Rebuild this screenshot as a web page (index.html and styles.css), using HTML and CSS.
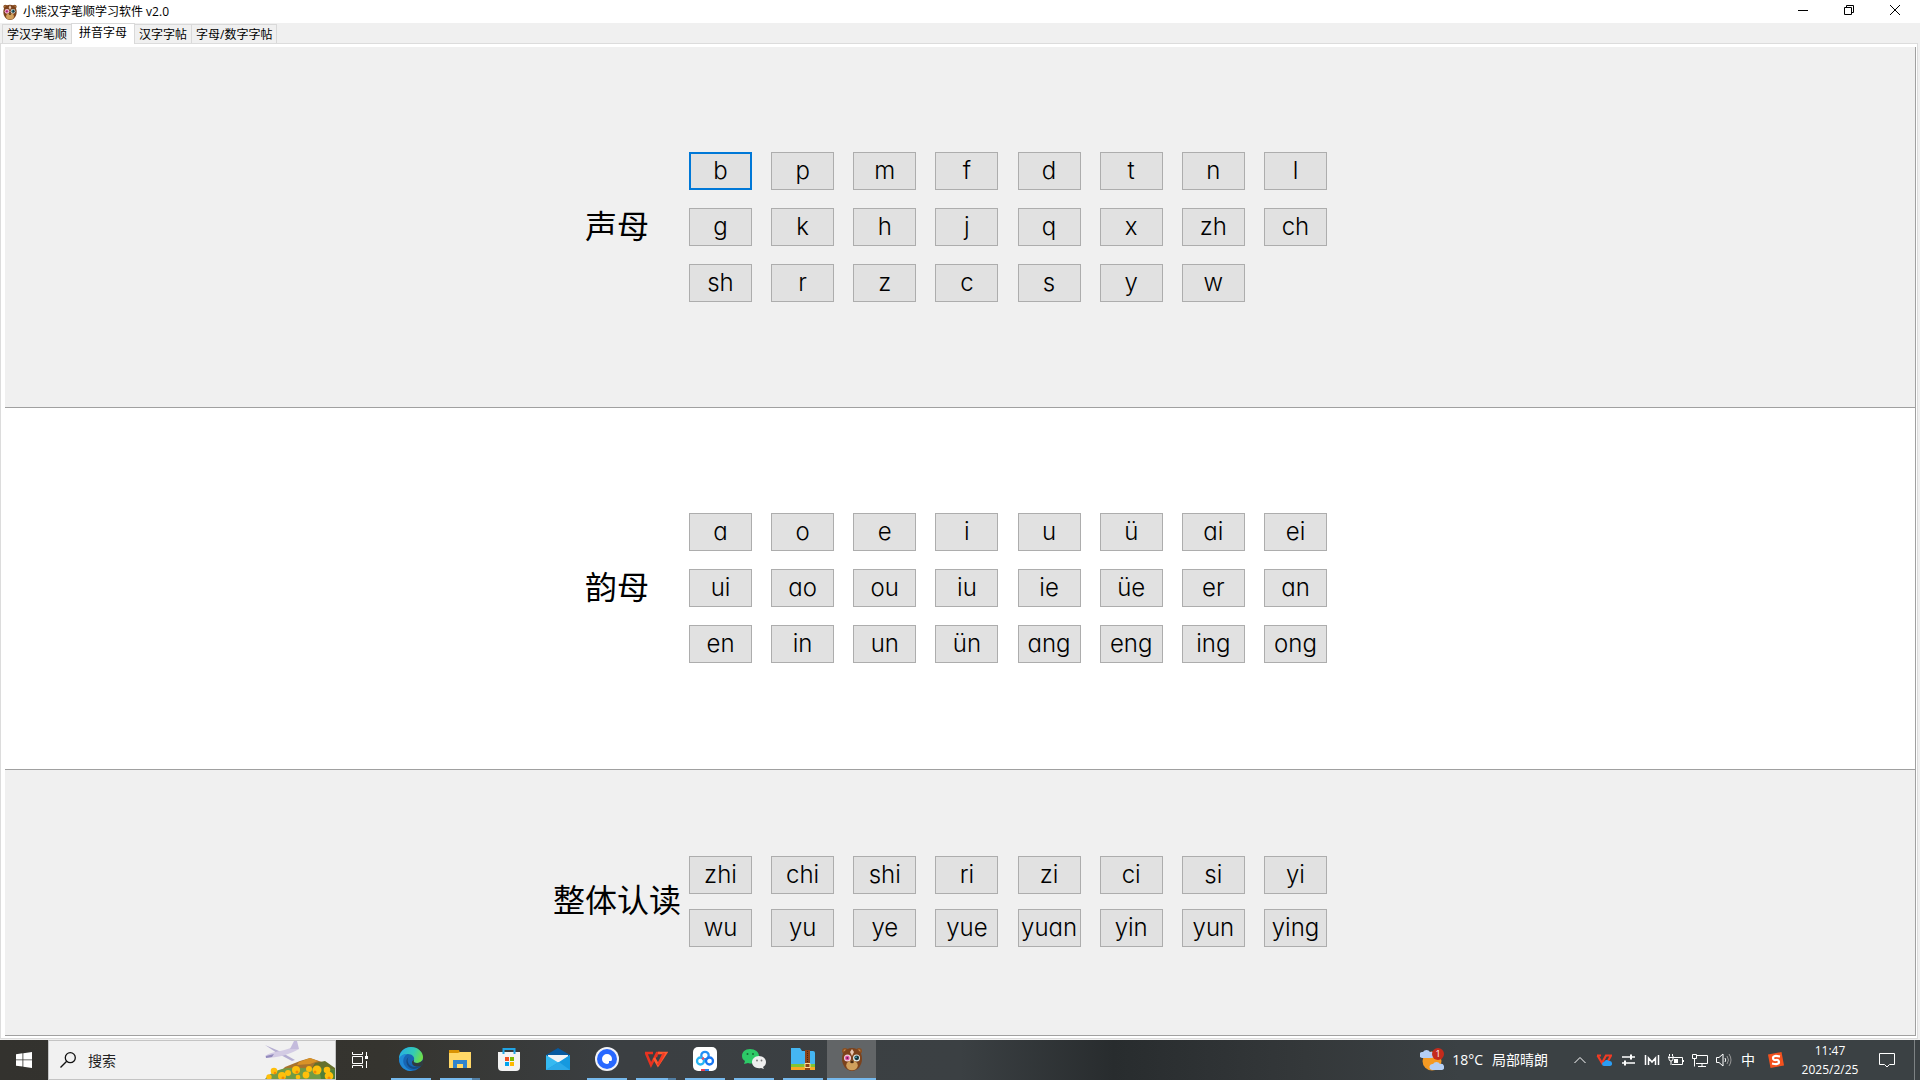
FILE: index.html
```html
<!DOCTYPE html>
<html lang="zh-CN">
<head>
<meta charset="utf-8">
<title>小熊汉字笔顺学习软件 v2.0</title>
<link rel="stylesheet" href="styles.css">
</head>
<body>
<svg class="defs" width="0" height="0" aria-hidden="true">
  <symbol id="bear" viewBox="0 0 24 24">
    <circle cx="5" cy="4" r="3" fill="#8a4f22"/><circle cx="19" cy="4" r="3" fill="#8a4f22"/>
    <circle cx="5" cy="4" r="1.400" fill="#c98c50"/><circle cx="19" cy="4" r="1.400" fill="#c98c50"/>
    <path d="M12 1C5 1 2 6 2 12c0 7 5 12 10 12s10-5 10-12C22 6 19 1 12 1z" fill="#7c421c"/>
    <path d="M12 2 10 5l2 4 2-4z" fill="#e6c8b4"/>
    <circle cx="7.500" cy="11" r="3.500" fill="#f0cfdd"/><circle cx="16.500" cy="11" r="3.500" fill="#dfe9e6"/>
    <circle cx="7.300" cy="11" r="2.300" fill="#e04aa0"/><circle cx="16.700" cy="10.800" r="2.400" fill="#16353d"/>
    <circle cx="7.300" cy="11" r="1" fill="#682050"/><circle cx="16" cy="10.300" r=".8" fill="#58cae0"/>
    <ellipse cx="12" cy="18.500" rx="5.800" ry="4.800" fill="#d1a05c"/>
    <ellipse cx="12" cy="15" rx="1.800" ry="1.300" fill="#4b2a12"/>
  </symbol>
</svg>

<div class="window">
  <header class="titlebar">
    <svg class="app-icon" aria-hidden="true"><use href="#bear"/></svg>
    <span class="title">小熊汉字笔顺学习软件 v2.0</span>
    <div class="window-controls">
      <button aria-label="最小化"><svg width="10" height="10"><path d="M0 5.500h10"/></svg></button>
      <button aria-label="还原"><svg width="10" height="10"><path d="M.5 2.500h7v7h-7zM2.500 2.500v-2h7v7h-2"/></svg></button>
      <button aria-label="关闭"><svg width="10" height="10"><path d="M0 0l10 10M10 0 0 10"/></svg></button>
    </div>
  </header>

  <nav class="tabs" role="tablist">
    <button role="tab">学汉字笔顺</button>
    <button role="tab" class="selected" aria-selected="true">拼音字母</button>
    <button role="tab">汉字字帖</button>
    <button role="tab">字母/数字字帖</button>
  </nav>

  <main class="pane">
    <section class="group">
      <div class="group-body">
        <h2>声母</h2>
        <div class="keys">
          <button class="focused">b</button><button>p</button><button>m</button><button>f</button><button>d</button><button>t</button><button>n</button><button>l</button>
          <button>g</button><button>k</button><button>h</button><button>j</button><button>q</button><button>x</button><button>zh</button><button>ch</button>
          <button>sh</button><button>r</button><button>z</button><button>c</button><button>s</button><button>y</button><button>w</button>
        </div>
      </div>
    </section>
    <section class="group white">
      <div class="group-body">
        <h2>韵母</h2>
        <div class="keys">
          <button>a</button><button>o</button><button>e</button><button>i</button><button>u</button><button>ü</button><button>ai</button><button>ei</button>
          <button>ui</button><button>ao</button><button>ou</button><button>iu</button><button>ie</button><button>üe</button><button>er</button><button>an</button>
          <button>en</button><button>in</button><button>un</button><button>ün</button><button>ang</button><button>eng</button><button>ing</button><button>ong</button>
        </div>
      </div>
    </section>
    <section class="group short">
      <div class="group-body">
        <h2>整体认读</h2>
        <div class="keys">
          <button>zhi</button><button>chi</button><button>shi</button><button>ri</button><button>zi</button><button>ci</button><button>si</button><button>yi</button>
          <button>wu</button><button>yu</button><button>ye</button><button>yue</button><button>yuan</button><button>yin</button><button>yun</button><button>ying</button>
        </div>
      </div>
    </section>
  </main>
</div>

<footer class="taskbar">
  <button class="start" aria-label="开始"><svg width="16" height="16" viewBox="0 0 16 16" fill="#fff"><path d="M0 2.200 6.500 1.300v6.200H0zM7.300 1.200 16 0v7.500H7.300zM0 8.300h6.500v6.200L0 13.700zM7.300 8.300H16V16l-8.700-1.200z"/></svg></button>
  <div class="search">
    <svg width="16" height="16" viewBox="0 0 16 16" fill="none" stroke="#111" stroke-width="1.300"><circle cx="10.300" cy="5.700" r="5"/><path d="M6.700 9.300.5 15.500"/></svg>
    <input type="text" placeholder="搜索" aria-label="搜索">
    <svg class="scene" width="70" height="38" viewBox="0 0 70 38" aria-hidden="true">
      <path d="M20 26 35 20l10-3 12 4 13 8v9H8z" fill="#a8732c"/>
      <path d="M34 21 45 17l8 3-8 3-13 1z" fill="#d99227"/><path d="M50 22l10-2 10 7v11H40z" fill="#66702c"/>
      <path d="M0 38c8-10 22-12 36-11s26-1 34 2v9z" fill="#719b45"/><path d="M54 26l16 3v9H56z" fill="#517f37"/>
      <g fill="#b5aed2"><path d="M0 4l14 6 16 9-3 1-15-8z"/><path d="M0 15c6-5 18-4 28-9l6 2c-8 5-22 9-33 9z" fill="#d3cbe4"/><path d="M25 8l4-8 3 0 2 8z" fill="#c4bbdc"/><path d="M1 15l8-2-2 3-6 1z" fill="#938bbd"/></g>
      <g fill="#ffbf0b"><circle cx="9" cy="30" r="3.300"/><circle cx="17" cy="35" r="4"/><circle cx="23" cy="32" r="3"/><circle cx="31" cy="29" r="4"/><circle cx="41" cy="34" r="3.400"/><circle cx="44" cy="28" r="3"/><circle cx="52" cy="29" r="4.500"/><circle cx="62" cy="29" r="3.300"/><circle cx="64" cy="35" r="4.300"/><circle cx="4" cy="36" r="2.700"/><circle cx="33" cy="36" r="2.300"/></g>
      <g fill="#f28b05"><circle cx="10" cy="32" r="1.300"/><circle cx="18" cy="37" r="1.500"/><circle cx="32" cy="31" r="1.500"/><circle cx="50" cy="31" r="1.500"/><circle cx="64" cy="37" r="1.500"/></g>
    </svg>
  </div>
  <button class="taskview" aria-label="任务视图"><svg width="16" height="16" viewBox="0 0 16 16" fill="none" stroke="#fff"><path d="M.5 0v2.500h10V0M.5 16v-2.500h10V16M.5 4.500h10v7H.5zM14.500 0v4M14.500 9v7"/><path d="M13 4h3v3h-3z" fill="#fff" stroke="none"/></svg></button>

  <div class="apps">
    <button class="running" aria-label="Edge"><svg viewBox="0 0 24 24">
      <defs><linearGradient id="ea" x1="0" x2="1" y1=".2" y2=".5"><stop stop-color="#26aee8"/><stop offset=".6" stop-color="#34cbb4"/><stop offset="1" stop-color="#6fdf48"/></linearGradient></defs>
      <circle cx="12" cy="12" r="12" fill="#1765b4"/>
      <path d="M0 12C0 5 5 0 12 0s12 5 12 10c0 4-3 6-6 6s-4-1-3-3c1-3-2-6-6-6-5 0-8 3-9 5z" fill="url(#ea)"/>
      <path d="M0 12c1-3 4-5 8-5-4 3-5 8-2 12 2 3 5 4 8 5C6 25 0 19 0 12z" fill="#2089d5"/>
      <path d="M9.500 10C7 14 10 20 16 20c3 0 5-1 7-2-1 1-4 4-8 4C8 22 5 13 9.500 10z" fill="#154a82"/>
      <path d="M15 13c-1 2 0 3 3 3 2 0 4-1 6-3v5c-3 2-11 3-11-3 0-1 1-2 2-2z" fill="#303b40"/></svg></button>
    <button class="running multi" aria-label="文件资源管理器"><svg viewBox="0 0 24 24"><path d="M1 3h10l1 3H1z" fill="#d99304"/><path d="M1 6h9l2-1h11v16H1z" fill="#ffd767"/><path d="M5 21v-8h14v8h-4v-4H9v4z" fill="#2f83cc"/></svg></button>
    <button aria-label="Microsoft Store"><svg viewBox="0 0 24 24"><path d="M1 5h22v15q0 4-4 4H5q-4 0-4-4z" fill="#f3f3f3"/><path d="M6.500 7V2h11v5" fill="none" stroke="#21a5e6" stroke-width="2"/><path fill="#f25022" d="M8 10h4v4H8z"/><path fill="#7fba00" d="M13 10h4v4h-4z"/><path fill="#00a4ef" d="M8 15h4v4H8z"/><path fill="#ffb900" d="M13 15h4v4h-4z"/></svg></button>
    <button aria-label="邮件"><svg viewBox="0 0 24 24"><path d="M0 8 12 1l12 7v8H0z" fill="#07599f"/><path d="M2 8h20v8H2z" fill="#f1f3f5"/><path d="M0 8l13 8 11-8v15H0z" fill="#35b9f1"/><path d="M0 23 13 15l11-7v15z" fill="#1599df"/><path d="M0 23l13-8 11 8z" fill="#2ba9e8"/></svg></button>
    <button class="running" aria-label="浏览器"><svg viewBox="0 0 24 24"><circle cx="12" cy="12" r="12" fill="#f2f3f7"/><circle cx="12" cy="12" r="10" fill="#2868ff"/><path d="M12 7a5 5 0 0 1 5 5q0 2-1 2h-2v2q-1 1-2 1a5 5 0 0 1 0-10z" fill="#fff"/></svg></button>
    <button class="running multi" aria-label="WPS"><svg viewBox="0 0 24 24" fill="none" stroke-width="2.600"><path d="M1 6h8M2 6l5 12 6-12h3M13 6l-1 4" stroke="#e83220"/><path d="M10 11l4 7 8-12h-8" stroke="#ff5a30"/><path d="M14 18l6-12" stroke="#f13a24"/></svg></button>
    <button class="running" aria-label="百度网盘"><svg viewBox="0 0 24 24"><rect width="24" height="24" rx="5" fill="#fff"/><g fill="none" stroke-width="2.300"><circle cx="12" cy="8.500" r="3.700" stroke="#2390f5"/><circle cx="7.500" cy="14" r="3.500" stroke="#27b5f5"/><circle cx="16.500" cy="14" r="3.500" stroke="#1976f1"/><path d="M9 12l2-1" stroke="#f14862"/></g><path d="M8 22h4v2H8z" fill="#e84053"/><path d="M12 22h4v2h-4z" fill="#2782ef"/></svg></button>
    <button class="running" aria-label="微信"><svg viewBox="0 0 24 24"><path d="M8 2c-5 0-8 3-8 7 0 2 1 4 3 5l-1 3 4-1c7 2 11-2 11-7 0-4-4-7-9-7z" fill="#2dca67"/><path d="M17 9c-4 0-7 3-7 6 0 4 4 7 9 6l3 1-1-2c2-1 3-3 3-5 0-3-3-6-7-6z" fill="#eee"/><g fill="#176a35"><circle cx="5.500" cy="7" r="1"/><circle cx="11" cy="7" r="1"/></g><g fill="#777"><circle cx="15" cy="13.500" r=".9"/><circle cx="19.500" cy="13.500" r=".9"/></g></svg></button>
    <button class="running" aria-label="压缩"><svg viewBox="0 0 24 24"><path d="M0 1h9l2 3h11q2 0 2 2v17H0z" fill="#45b6f2"/><path d="M0 17h24v3H0z" fill="#80c535"/><path d="M0 20h24v3H0z" fill="#f7a826"/><path d="M14 3h5v20h-5z" fill="#8b441a"/><path d="M16.500 4v12" stroke="#4b230e" stroke-dasharray="1 1"/><path d="M14 16.500h5v4h-5z" fill="none" stroke="#ffe09a"/></svg></button>
    <button class="running active" aria-label="小熊汉字笔顺学习软件"><svg><use href="#bear"/></svg></button>
  </div>

  <div class="tray">
    <button class="weather"><svg width="24" height="24" viewBox="0 0 24 24" aria-hidden="true"><circle cx="12" cy="13" r="9.500" fill="#f59a23"/><path d="M2 10a3 3 0 0 1 1-6 4 4 0 0 1 7 0 3 3 0 0 1 2 6zM12 22a3 3 0 0 1 1-6 4 4 0 0 1 7 0 3 3 0 0 1 2 6z" fill="#b5cff5"/><circle cx="18" cy="6" r="6" fill="#c42b1c"/><text x="18" y="9" class="badge">1</text></svg><span>18°C</span><span>局部晴朗</span></button>
    <div class="tray-icons">
      <button aria-label="显示隐藏的图标"><svg viewBox="0 0 16 16"><path d="M2.500 11 8 5.500l5.500 5.500"/></svg></button>
      <button aria-label="WPS 云"><svg viewBox="0 0 16 16"><path d="M1 3.500h4M1.500 3.500 6 11l4-7.500h5L12 9" stroke="#f13b24" stroke-width="2.200"/><path d="M8 14a2 2 0 0 1 0-4 3 3 0 0 1 5-1 2.500 2.500 0 0 1 1 5z" fill="#2b9df4" stroke="none"/></svg></button>
      <button aria-label="切换"><svg viewBox="0 0 16 16"><path d="M2 5h13M2 11h13" stroke-width="1.700"/><path d="M11 2.500v5M5 8.500v5" stroke-width="2"/></svg></button>
      <button aria-label="监控"><svg viewBox="0 0 16 16"><path d="M1.500 3v10M14.500 3v10M4.500 13V6L8 10l3.500-4v7" stroke-width="1.500"/></svg></button>
      <button aria-label="电池"><svg viewBox="0 0 16 16"><path d="M5 5.500h9.500v7H4M3 9v4M1 4v3q0 2 2 2t2-2V4M1.500 2v2M4.500 2v2M0 5.500h6M15.500 8v2"/><path d="M6 7h4v4H6z" fill="#fff" stroke="none"/></svg></button>
      <button aria-label="网络"><svg viewBox="0 0 16 16"><path d="M5 3.500h10.500v8H4M10 11.500v3M6 14.500h8M.5 2.500h4v4h-4zM2.500 6.500v8"/></svg></button>
      <button aria-label="音量"><svg viewBox="0 0 16 16"><path d="M.5 5.500H3l4-3.500v12l-4-3.500H.5zM9 6q1.500 2 0 4"/><path d="M11 4q3 4 0 8M13 2q4 6 0 12" stroke="#999"/></svg></button>
      <button class="ime">中</button>
    </div>
    <button class="sogou" aria-label="搜狗输入法"><svg width="16" height="16" viewBox="0 0 16 16"><path d="M0 2.500 13.500 0 16 13.500 2.500 16z" fill="#f4511e"/><path d="M12 4.500Q5 3 5 5.700T8 8t3 2.300-7 1.200" fill="none" stroke="#fff" stroke-width="2.200"/></svg></button>
    <button class="clock"><time>11:47</time><span>2025/2/25</span></button>
    <button class="notify" aria-label="通知"><svg width="16" height="16" viewBox="0 0 16 16" fill="none" stroke="#fff"><path d="M.5 1.500h15v11h-5L8 15l-2.500-2.500h-5z"/></svg></button>
    <span class="show-desktop"></span>
  </div>
</footer>
</body>
</html>
```
FILE: styles.css
```css
* { box-sizing: border-box; }

body {
  margin: 0;
  min-height: 100vh;
  display: flex;
  flex-direction: column;
  background: #f0f0f0;
  color: #000;
  font: 12px/16px "Open Sans", "Noto Sans CJK SC", sans-serif;
}

button {
  margin: 0;
  padding: 0;
  border: 0;
  background: none;
  color: inherit;
  font: inherit;
}

svg { display: block; flex: none; }
.defs { position: absolute; }

.window {
  flex: 1;
  display: flex;
  flex-direction: column;
  padding-bottom: 1px;
}

/* Title bar */
.titlebar {
  display: flex;
  align-items: center;
  height: 23px;
  padding-left: 2px;
  background: #fff;
}
.app-icon { width: 16px; height: 16px; }
.title { margin-left: 5px; }
.window-controls {
  display: flex;
  align-self: flex-start;
  margin: 0 2px 0 auto;
}
.window-controls button {
  display: flex;
  align-items: center;
  justify-content: center;
  width: 46px;
  height: 20px;
}
.window-controls svg { fill: none; stroke: #000; }

/* Tabs */
.tabs {
  display: flex;
  align-items: flex-end;
  height: 21px;
  padding-left: 2px;
  margin-bottom: -1px;
  z-index: 1;
}
.tabs button {
  height: 19px;
  margin-bottom: 1px;
  padding: 2px 4px 0;
  border: 1px solid #d9d9d9;
  border-left-width: 0;
  border-bottom-width: 0;
  white-space: nowrap;
}
.tabs button:first-child { border-left-width: 1px; border-right-width: 0; }
.tabs .selected {
  height: 21px;
  margin-bottom: 0;
  padding: 0 7px 2px;
  border-left-width: 1px;
  background: #fff;
}

/* Pinyin groups */
.pane {
  flex: 1;
  display: flex;
  flex-direction: column;
  margin-right: 2px;
  padding: 3px 1px 2px 4px;
  border: 1px solid #dcdcdc;
  background: #fff;
}
.group {
  flex: 361 0 0;
  display: flex;
  align-items: center;
  justify-content: center;
  border: solid #a0a0a0;
  border-width: 0 1px 1px 0;
  background: #f0f0f0;
}
.group.white { flex-grow: 362; background: #fff; }
.group.short { flex-grow: 264; padding-bottom: 2px; }
.group-body {
  display: flex;
  align-items: center;
  gap: 4px;
  margin-right: 44px;
}
.group h2 {
  width: 136px;
  margin: 0;
  padding-bottom: 6px;
  font: 32px/40px "Noto Sans CJK SC", sans-serif;
  text-align: center;
}
.keys {
  display: grid;
  grid-template-columns: repeat(8, 63px);
  justify-content: space-between;
  width: 638px;
  row-gap: 18px;
}
.short .keys { row-gap: 15px; }
.keys button {
  height: 38px;
  border: 1px solid #adadad;
  background: #e1e1e1;
  font: 300 24px/32px Inter, sans-serif;
  font-feature-settings: "cv11";
  font-optical-sizing: none;
}
.keys .focused { border: 2px solid #0078d7; }

/* Taskbar */
.taskbar {
  display: flex;
  height: 40px;
  background: linear-gradient(90deg, #33322e 0, #35342f 20%, #3b3f42 32%, #3b4043 50%, #282c2e 58%, #34383a 68%, #3b4144 76%, #3b4144 100%);
  color: #fff;
}
.taskbar button {
  display: flex;
  align-items: center;
  justify-content: center;
}
.start { width: 48px; }
.search {
  display: flex;
  align-items: center;
  width: 288px;
  padding-left: 11px;
  border: 1px solid #c4c4c4;
  background: #f1f1f1;
}
.search input {
  flex: 1;
  min-width: 0;
  margin-left: 12px;
  padding: 0;
  border: 0;
  background: none;
  font: 14px/20px "Noto Sans CJK SC", sans-serif;
}
.search input::placeholder { color: #222; opacity: 1; }
.taskview { width: 48px; margin-right: 2px; }
.apps { display: flex; }
.apps button {
  width: 49px;
  border-bottom: 2px solid transparent;
  background: no-repeat center bottom / 40px 2px;
  background-origin: border-box;
  background-clip: border-box;
}
.apps svg { width: 24px; height: 24px; }
.apps .running { background-image: linear-gradient(#76b9ed, #76b9ed); }
.apps .multi { background-image: linear-gradient(90deg, #76b9ed 80%, #527fa4 80%); }
.apps .active { background-color: #626567; background-size: 100% 2px; }

.tray { display: flex; margin-left: auto; }
.weather { gap: 9px; margin-right: 20px; font-size: 14px; }
.weather svg { margin-right: -1px; }
.badge { fill: #fff; font-size: 9px; text-anchor: middle; }
.tray-icons { display: flex; }
.tray-icons button { width: 24px; }
.tray-icons svg { width: 16px; height: 16px; fill: none; stroke: #fff; }
.taskbar .ime { font-size: 14px; }
.sogou { width: 32px; }
.taskbar .clock {
  flex-direction: column;
  gap: 3px;
  width: 76px;
}
.notify { width: 38px; }
.show-desktop {
  width: 14px;
  border-right: 5px solid #3b4144;
  box-shadow: inset -1px 0 #7d8284;
}
```
